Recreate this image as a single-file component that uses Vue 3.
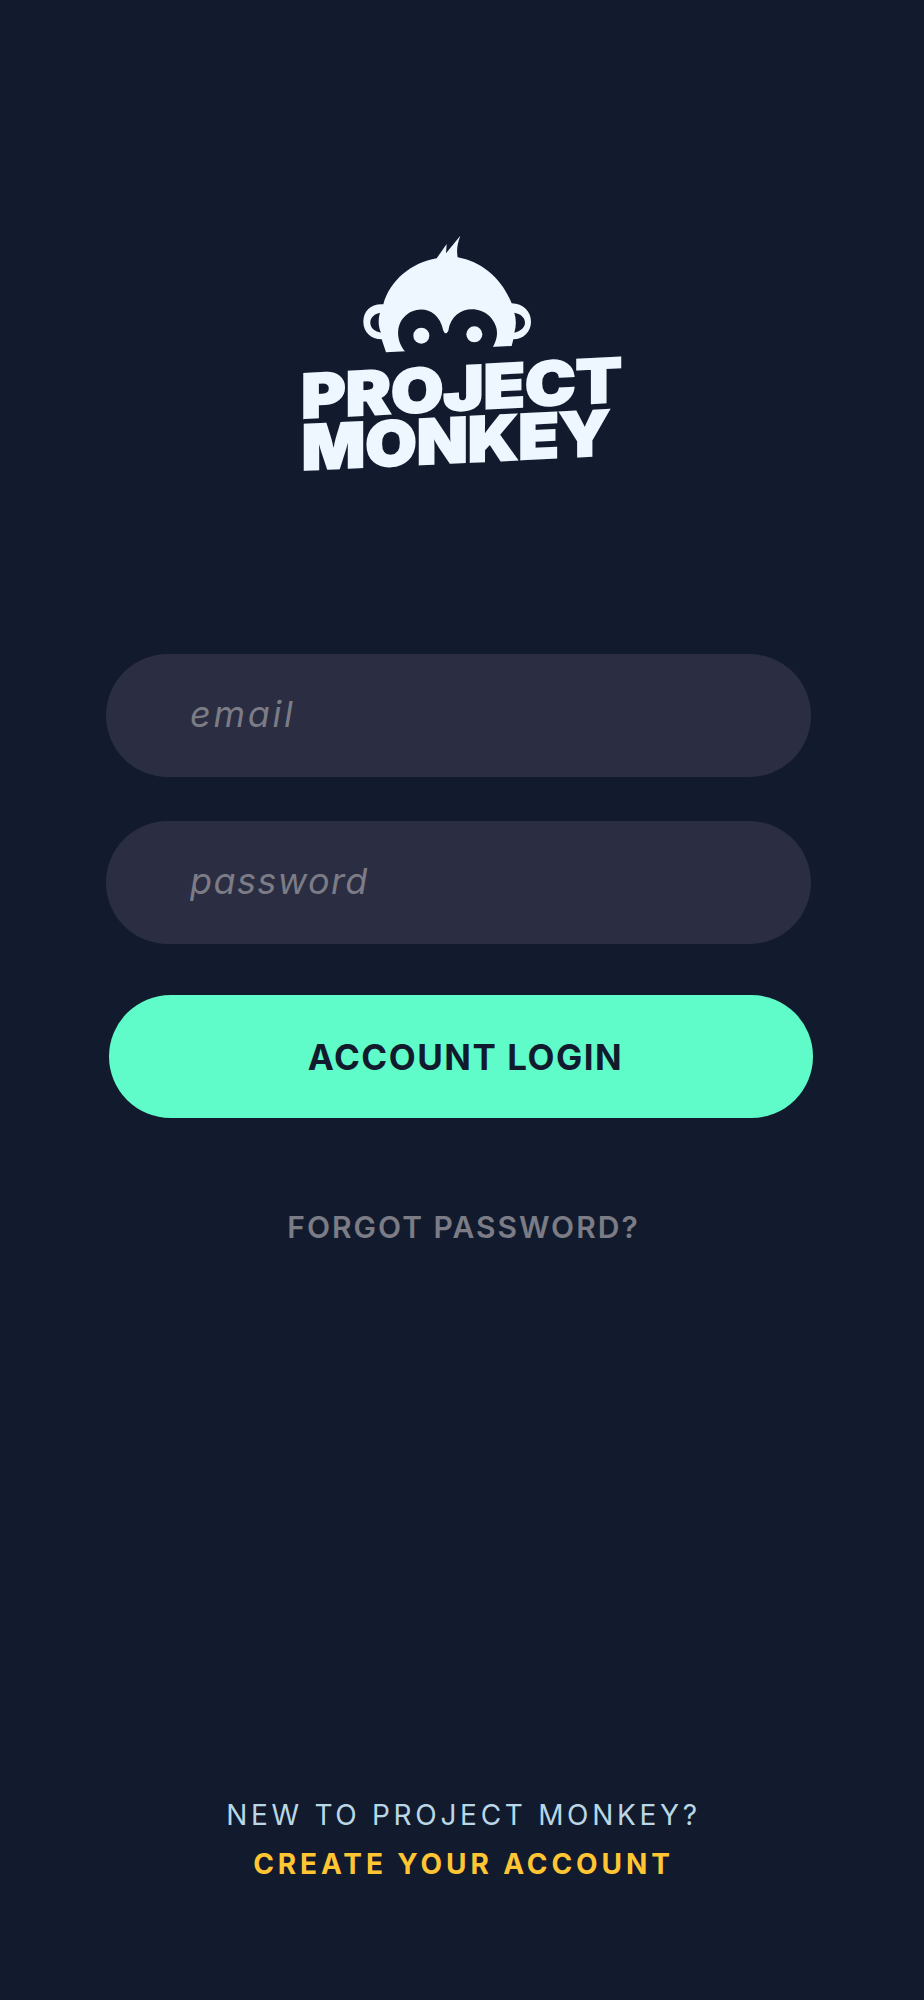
<template>
  <div class="login-page">
    <div class="logo-wrap">
      <svg class="logo" viewBox="0 0 1080 810" width="360" height="270" role="img" aria-label="Project Monkey">
        <path class="logo-fill" d="M318 397 L305 358 C272 358 250 335 250 305 C250 272 275 250 310 253 C330 180 395 128 470 115 L500 72 L498 100 L541 47 C530 75 530 95 533 112 C605 125 665 175 695 250 C730 250 753 275 753 305 C753 335 730 358 700 358 L695 378 Z" />
        <path class="logo-cut" d="M300 278 C280 282 270 295 271 310 C272 325 285 335 303 338 C295 320 294 298 300 278 Z" />
        <path class="logo-cut" d="M703 278 C725 282 735 295 735 308 C735 322 722 333 703 338 C709 318 709 298 703 278 Z" />
        <path class="logo-cut" d="M381 400 C350 372 345 320 372 292 C405 255 475 258 490 332 Q497 348 505 332 C515 262 590 252 628 288 C660 322 655 355 636 386 Z" />
        <circle class="logo-fill" cx="424" cy="347" r="24" />
        <circle class="logo-fill" cx="583" cy="343" r="24" />
        <g class="logo-text">
          <text transform="translate(64 595) skewY(-3)" textLength="962" lengthAdjust="spacingAndGlyphs" font-size="182">PROJECT</text>
          <text transform="translate(65 750) skewY(-2.8)" textLength="926" lengthAdjust="spacingAndGlyphs" font-size="186">MONKEY</text>
        </g>
      </svg>
    </div>

    <form class="login-form" @submit.prevent>
      <input class="field field-email" type="email" placeholder="email" />
      <input class="field field-password" type="password" placeholder="password" />
      <button class="btn-login" type="submit">ACCOUNT LOGIN</button>
    </form>

    <a class="forgot" href="#">FORGOT PASSWORD?</a>

    <div class="signup">
      <div class="signup-label">NEW TO PROJECT MONKEY?</div>
      <a class="signup-link" href="#">CREATE YOUR ACCOUNT</a>
    </div>
  </div>
</template>

<script setup>
</script>

<style>
html, body { background: #121b2d; }
</style>

<style scoped>
.login-page {
  height: 2000px;
  background: #121b2d;
  display: flex;
  flex-direction: column;
  font-family: Inter, "Liberation Sans", sans-serif;
  box-sizing: border-box;
}
.logo-wrap { padding: 220px 0 0 280px; height: 270px; flex: none; }
.logo { display: block; }
.logo-fill { fill: #eef6ff; }
.logo-cut { fill: #121b2d; }
.logo-text text {
  fill: #eef6ff;
  stroke: #eef6ff;
  stroke-width: 6px;
  font-family: Inter, "Liberation Sans", sans-serif;
  font-weight: 900;
}
.login-form {
  margin-top: 164px;
  padding-left: 106px;
  display: flex;
  flex-direction: column;
  align-items: flex-start;
}
.field {
  width: 705px;
  height: 123px;
  box-sizing: border-box;
  border: none;
  outline: none;
  border-radius: 62px;
  background: #2b2d42;
  padding: 0 0 3px 84px;
  color: #7b7c85;
  font-family: inherit;
  font-size: 36px;
  font-style: italic;
}
.field::placeholder { color: #7b7c85; opacity: 1; }
.field-email { letter-spacing: 2.7px; }
.field-password { margin-top: 44px; letter-spacing: 1.4px; }
.btn-login {
  margin: 51px 0 0 3px;
  width: 704px;
  height: 123px;
  border: none;
  border-radius: 62px;
  background: #5ffbc8;
  color: #121b2d;
  font-family: inherit;
  font-size: 35px;
  font-weight: 700;
  letter-spacing: 1.5px;
  padding: 0 0 0 9px;
}
.forgot {
  margin-top: 91px;
  text-align: center;
  color: #7b7c85;
  font-size: 30px;
  font-weight: 600;
  letter-spacing: 2px;
  line-height: 36px;
  text-decoration: none;
  padding-left: 3px;
}
.signup {
  margin-top: auto;
  padding: 0 0 118px 3px;
  text-align: center;
}
.signup-label {
  color: #b9d7e6;
  font-size: 28px;
  letter-spacing: 3.7px;
  line-height: 36px;
}
.signup-link {
  display: block;
  margin-top: 13px;
  color: #ffc533;
  font-size: 28px;
  font-weight: 700;
  letter-spacing: 3.9px;
  line-height: 36px;
  text-decoration: none;
}
</style>
